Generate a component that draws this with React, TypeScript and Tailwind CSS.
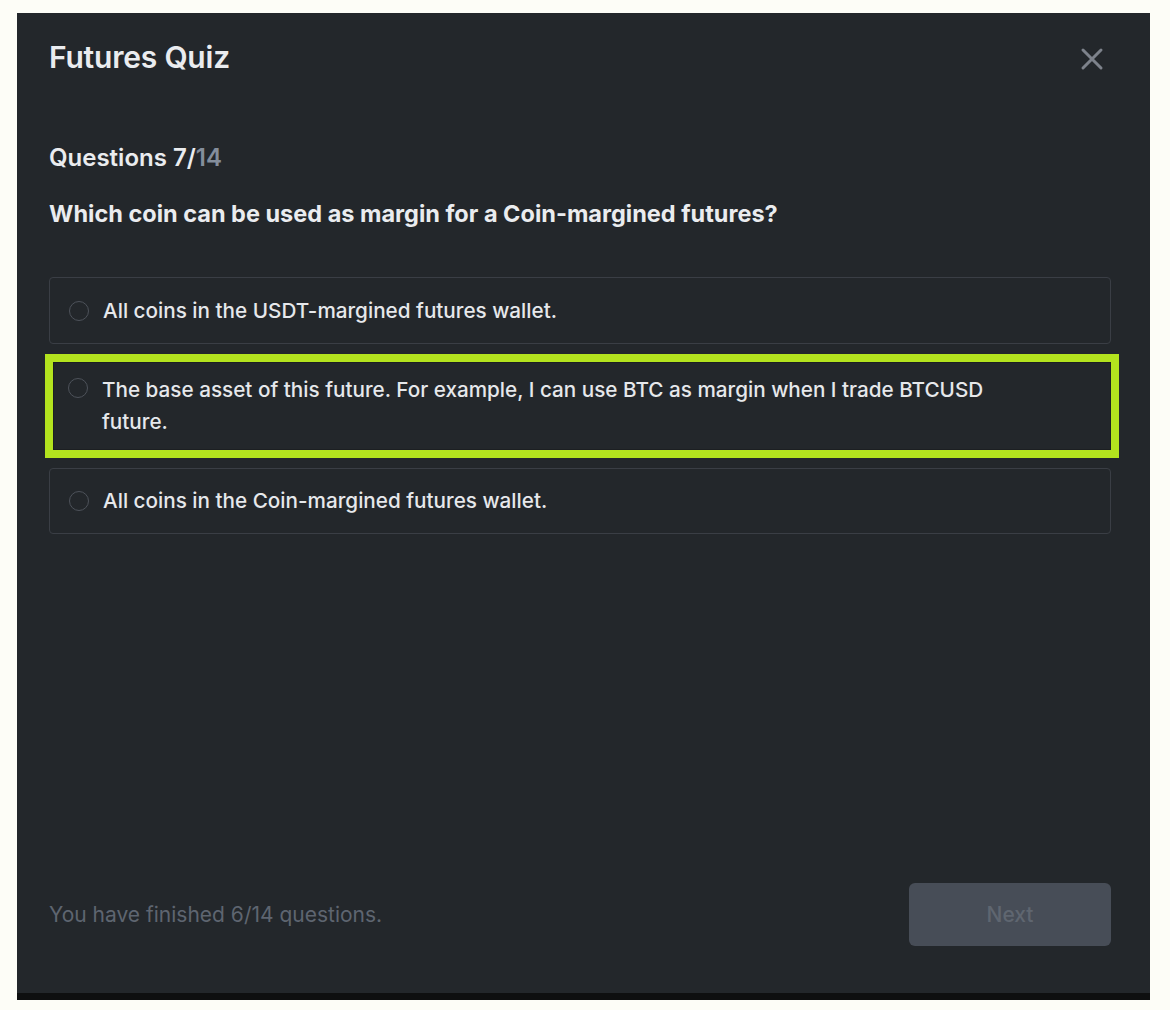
import React from "react";

const options = [
  "All coins in the USDT-margined futures wallet.",
  "The base asset of this future. For example, I can use BTC as margin when I trade BTCUSD future.",
  "All coins in the Coin-margined futures wallet.",
];

function Radio() {
  return (
    <span className="h-[20px] w-[20px] shrink-0 rounded-full border-[1.5px] border-[#4d525a]" />
  );
}

export default function App() {
  return (
    <div
      className="h-[1010px] w-[1170px] bg-[#fdfdf7] pl-[17px] pt-[13px]"
      style={{ fontFamily: "Inter, 'Noto Sans', sans-serif" }}
    >
      <div className="flex h-[987px] w-[1133px] flex-col border-b-[7px] border-[#0e0f10] bg-[#23272b] pb-[47px] pl-[32px] pr-[39px] pt-[26px]">
        <div className="flex items-start justify-between">
          <h1 className="text-[30px] font-semibold leading-[36px] tracking-[-0.2px] text-[#eaecef]">
            Futures Quiz
          </h1>
          <svg
            width="24"
            height="24"
            viewBox="0 0 24 24"
            className="mr-[7px] mt-[8px]"
            fill="none"
            stroke="#7d828b"
            strokeWidth="3"
            strokeLinecap="round"
          >
            <path d="M3 3L21 21M21 3L3 21" />
          </svg>
        </div>

        <div className="mt-[67px] text-[24px] font-semibold leading-[32px] text-[#eaecef]">
          Questions 7/<span className="text-[#848e9c]">14</span>
        </div>
        <div className="mt-[24px] text-[23.5px] font-bold leading-[32px] text-[#eaecef]">
          Which coin can be used as margin for a Coin-margined futures?
        </div>

        <div className="mt-[47px] flex flex-col">
          <div className="flex h-[67px] items-center gap-[14px] rounded-[4px] border border-[#3a3e45] px-[19px]">
            <Radio />
            <span className="text-[20.7px] font-medium leading-[28px] text-[#e6e8eb]">
              {options[0]}
            </span>
          </div>

          <div className="mt-[10px] ml-[-4px] mr-[-8px] border-[8px] border-[#b3e31e] bg-[#1c1f22] p-[1px]">
            <div className="flex h-[86px] items-start gap-[14px] bg-[#23272b] pl-[14px] pr-[19px] pt-[15px]">
              <Radio />
              <span className="-mt-[4px] max-w-[900px] text-[20.7px] font-medium leading-[32px] text-[#e6e8eb]">
                {options[1]}
              </span>
            </div>
          </div>

          <div className="mt-[10px] flex h-[66px] items-center gap-[14px] rounded-[4px] border border-[#3a3e45] px-[19px]">
            <Radio />
            <span className="text-[20.7px] font-medium leading-[28px] text-[#e6e8eb]">
              {options[2]}
            </span>
          </div>
        </div>

        <div className="mt-auto flex items-center justify-between">
          <span className="text-[21px] leading-[28px] text-[#5e6570]">
            You have finished 6/14 questions.
          </span>
          <button className="h-[63px] w-[202px] rounded-[6px] bg-[#474d57] text-[21px] font-medium text-[#5f6670]">
            Next
          </button>
        </div>
      </div>
    </div>
  );
}
